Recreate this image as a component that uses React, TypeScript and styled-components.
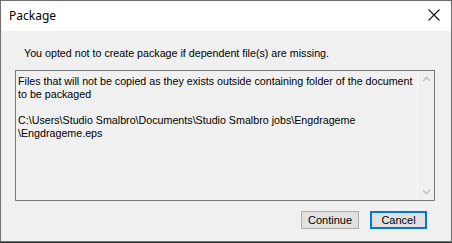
import React from 'react'
import styled, { createGlobalStyle } from 'styled-components'

const GlobalStyle = createGlobalStyle`
  html, body {
    margin: 0;
    padding: 0;
    background: #2f3a33;
    overflow: hidden;
  }
`

const Dialog = styled.div`
  width: 450px;
  height: 240px;
  border: 1px solid #6e6e6e;
  background: #f0f0f0;
  display: flex;
  flex-direction: column;
  font-family: 'Liberation Sans', Arial, sans-serif;
  font-size: 10.7px;
  color: #000;
`

const TitleBar = styled.div`
  height: 30px;
  background: #ffffff;
  display: flex;
  align-items: center;
  justify-content: space-between;
  padding: 0 11px 0 8px;
`

const Title = styled.span`
  font-family: 'Noto Sans', 'Open Sans', sans-serif;
  font-size: 12px;
  color: #000;
  margin-top: -1px;
`

const CloseButton = styled.span`
  display: flex;
  width: 12px;
  height: 12px;
  margin-top: -2px;
`

const Body = styled.div`
  display: flex;
  flex-direction: column;
  flex: 1;
  padding: 16px 16px 0 14px;
`

const Message = styled.p`
  margin: 0 0 10px 9px;
  line-height: 13px;
`

const TextBox = styled.div`
  width: 418px;
  height: 129px;
  border: 1px solid #7a7a7a;
  background: #f0f0f0;
  display: flex;
`

const TextArea = styled.div`
  flex: 1;
  padding: 4px 2px;
  line-height: 13px;
  white-space: pre;
  overflow: hidden;
`

const ScrollBar = styled.div`
  width: 16px;
  border-left: 1px solid #fafafa;
  background: #f0f0f0;
  display: flex;
  flex-direction: column;
  justify-content: space-between;
  align-items: center;
  padding: 5px 0;
`

const Arrow = styled.svg`
  width: 9px;
  height: 6px;
`

const ButtonRow = styled.div`
  display: flex;
  justify-content: flex-end;
  gap: 11px;
  margin-top: 10px;
  padding-right: 8px;
`

const Button = styled.button<{ $default?: boolean }>`
  width: ${(p) => (p.$default ? '57px' : '58px')};
  height: 18px;
  padding: 0;
  font-family: 'Liberation Sans', Arial, sans-serif;
  font-size: 11px;
  color: #000;
  background: #e1e1e1;
  border: ${(p) => (p.$default ? '2px solid #0078d7' : '1px solid #adadad')};
  box-sizing: border-box;
  line-height: 14px;
`

const content = `Files that will not be copied as they exists outside containing folder of the document
to be packaged

C:\\Users\\Studio Smalbro\\Documents\\Studio Smalbro jobs\\Engdrageme
\\Engdrageme.eps`

export default function App() {
  return (
    <>
      <GlobalStyle />
      <Dialog>
        <TitleBar>
          <Title>Package</Title>
          <CloseButton>
            <svg width="12" height="12" viewBox="0 0 12 12">
              <path d="M0.5 0.5 L11.5 11.5 M11.5 0.5 L0.5 11.5" stroke="#111" strokeWidth="1.1" fill="none" />
            </svg>
          </CloseButton>
        </TitleBar>
        <Body>
          <Message>You opted not to create package if dependent file(s) are missing.</Message>
          <TextBox>
            <TextArea>{content}</TextArea>
            <ScrollBar>
              <Arrow viewBox="0 0 9 6">
                <path d="M1 5 L4.5 1.5 L8 5" stroke="#c2c2c2" strokeWidth="1.6" fill="none" />
              </Arrow>
              <Arrow viewBox="0 0 9 6">
                <path d="M1 1 L4.5 4.5 L8 1" stroke="#c2c2c2" strokeWidth="1.6" fill="none" />
              </Arrow>
            </ScrollBar>
          </TextBox>
          <ButtonRow>
            <Button>Continue</Button>
            <Button $default>Cancel</Button>
          </ButtonRow>
        </Body>
      </Dialog>
    </>
  )
}
